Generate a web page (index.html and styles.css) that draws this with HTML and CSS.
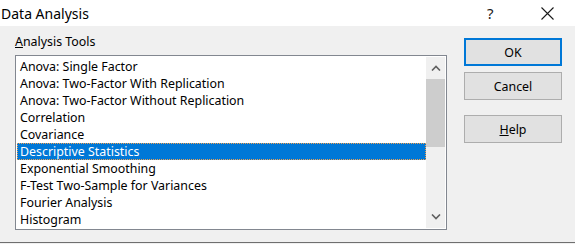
FILE: index.html
```html
<!DOCTYPE html>
<html lang="en">
<head>
    <meta charset="UTF-8">
    <title>Data Analysis</title>
    <link rel="stylesheet" href="styles.css">
</head>
<body>

<div class="titlebar">
    <span class="title">Data Analysis</span>
    <span class="help-mark">?</span>
    <span class="close-mark">
        <svg width="13" height="13" viewBox="0 0 13 13"><path d="M0.5 0.5 L12.5 12.5 M12.5 0.5 L0.5 12.5" stroke="#1a1a1a" stroke-width="1.1" fill="none"/></svg>
    </span>
</div>

<div class="dialog">
    <div class="tools">
        <div class="tools-label"><u>A</u>nalysis Tools</div>
        <div class="listbox">
            <ul class="items">
                <li>Anova: Single Factor</li>
                <li>Anova: Two-Factor With Replication</li>
                <li>Anova: Two-Factor Without Replication</li>
                <li>Correlation</li>
                <li>Covariance</li>
                <li class="selected">Descriptive Statistics</li>
                <li>Exponential Smoothing</li>
                <li>F-Test Two-Sample for Variances</li>
                <li>Fourier Analysis</li>
                <li>Histogram</li>
            </ul>
            <div class="scrollbar">
                <div class="arrow">
                    <svg width="10" height="6" viewBox="0 0 10 6"><path d="M1 5.5 L5 1.5 L9 5.5" stroke="#606060" stroke-width="1.6" fill="none"/></svg>
                </div>
                <div class="track"><div class="thumb"></div></div>
                <div class="arrow">
                    <svg width="10" height="6" viewBox="0 0 10 6"><path d="M1 0.5 L5 4.5 L9 0.5" stroke="#606060" stroke-width="1.6" fill="none"/></svg>
                </div>
            </div>
        </div>
    </div>

    <div class="buttons">
        <button class="btn default">OK</button>
        <button class="btn">Cancel</button>
        <button class="btn spaced"><u>H</u>elp</button>
    </div>
</div>

</body>
</html>
```

FILE: styles.css
```css
body {
    margin: 0;
    width: 575px;
    height: 244px;
    font-family: "Noto Sans", "Open Sans", sans-serif;
    font-size: 12.4px;
    color: #000;
    background-color: #f0f0f0;
    overflow: hidden;
}
.titlebar {
    display: flex;
    align-items: center;
    height: 26px;
    background-color: #fff;
}
.title {
    flex: 1;
    padding-left: 1px;
    font-size: 14px;
    color: #000;
}
.help-mark {
    width: 16px;
    margin-right: 38px;
    font-size: 15px;
    color: #1a1a1a;
}
.close-mark {
    display: flex;
    margin-right: 21px;
}
.dialog {
    display: flex;
    height: 217px;
    padding-left: 15px;
    box-sizing: border-box;
    border-bottom: 1px solid #6f6f6f;
}
.tools {
    width: 432px;
}
.tools-label {
    height: 29px;
    line-height: 29px;
    padding-top: 1px;
    box-sizing: border-box;
}
.listbox {
    display: flex;
    height: 175px;
    border: 1px solid #828790;
    box-sizing: border-box;
    background-color: #fff;
}
.items {
    flex: 1;
    list-style: none;
    margin: 0;
    padding: 2px 0 0 1px;
}
.items li {
    height: 17px;
    line-height: 18px;
    padding-left: 3px;
    white-space: nowrap;
}
.items li.selected {
    background-color: #0078d7;
    color: #fff;
    outline: 1px dotted #f0a050;
    outline-offset: -1px;
}
.scrollbar {
    display: flex;
    flex-direction: column;
    width: 19px;
    margin: 1px 1px 1px 0;
    background-color: #f0f0f0;
}
.arrow {
    display: flex;
    align-items: center;
    justify-content: center;
    height: 22px;
}
.track {
    flex: 1;
}
.thumb {
    height: 68px;
    background-color: #cdcdcd;
}
.buttons {
    display: flex;
    flex-direction: column;
    margin-left: 17px;
    padding-top: 12px;
}
.btn {
    width: 98px;
    height: 28px;
    margin-bottom: 6px;
    font-family: inherit;
    font-size: 12.4px;
    color: #000;
    background-color: #e1e1e1;
    border: 1px solid #adadad;
    padding: 0;
}
.btn.default {
    border: 2px solid #0078d7;
}
.btn.spaced {
    margin-top: 9px;
}
```
